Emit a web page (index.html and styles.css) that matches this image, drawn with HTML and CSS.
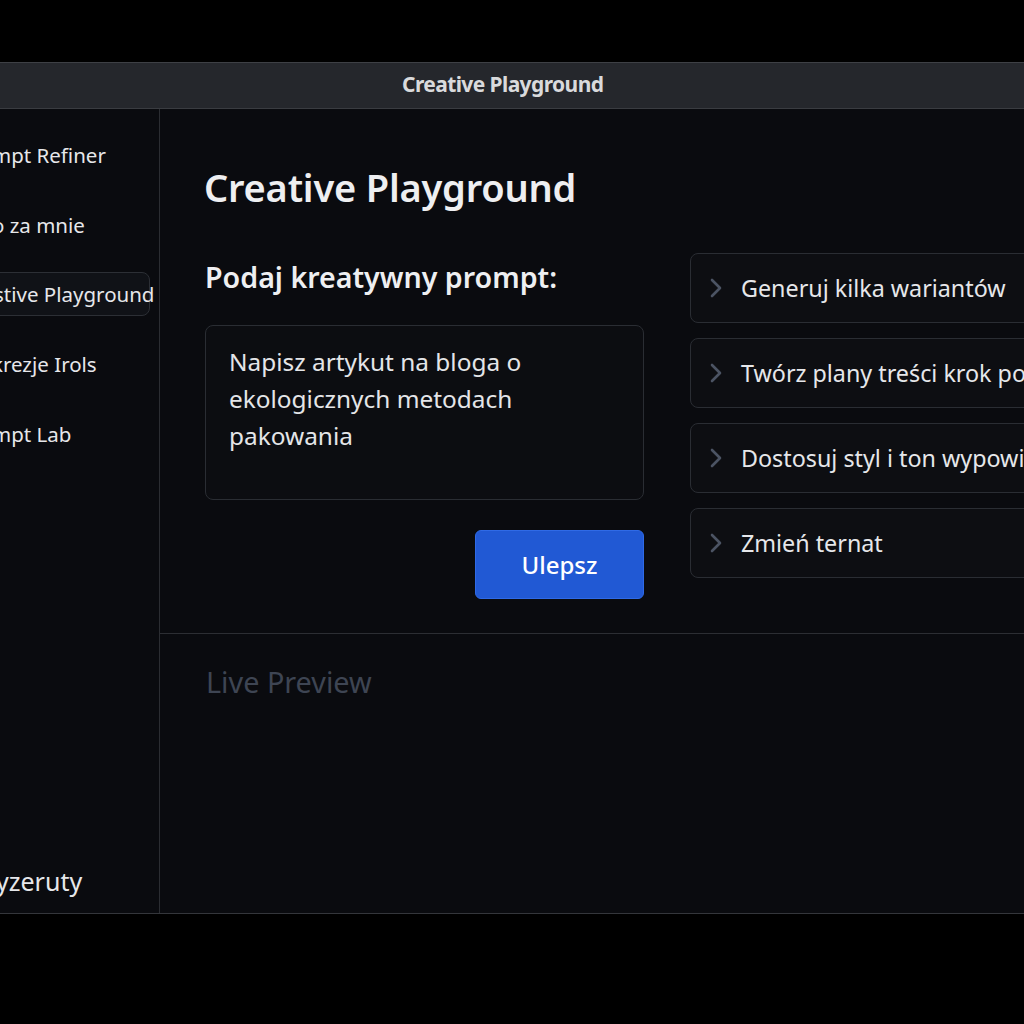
FILE: index.html
```html
<!DOCTYPE html>
<html lang="pl">
<head>
<meta charset="utf-8">
<title>Creative Playground</title>
<link rel="stylesheet" href="styles.css">
</head>
<body>
<div class="screen">
  <div class="window">
    <header class="titlebar">Creative Playground</header>
    <div class="body">
      <nav class="sidebar">
        <ul class="nav">
          <li class="nav-item">mpt Refiner</li>
          <li class="nav-item">o za mnie</li>
          <li class="nav-item active">stive Playground</li>
          <li class="nav-item">krezje Irols</li>
          <li class="nav-item">mpt Lab</li>
        </ul>
        <div class="nav-item nav-bottom">yzeruty</div>
      </nav>
      <main class="main">
        <section class="editor">
          <h1 class="page-title">Creative Playground</h1>
          <div class="columns">
            <div class="left-col">
              <h2 class="label">Podaj kreatywny prompt:</h2>
              <div class="prompt-box">Napisz artykut na bloga o ekologicznych metodach pakowania</div>
              <div class="actions"><button class="btn-primary">Ulepsz</button></div>
            </div>
            <div class="right-col">
              <div class="option"><svg class="chev" viewBox="0 0 12 20"><path d="M2 2 L10 10 L2 18"/></svg><span>Generuj kilka wariantów</span></div>
              <div class="option"><svg class="chev" viewBox="0 0 12 20"><path d="M2 2 L10 10 L2 18"/></svg><span>Twórz plany treści krok po kroku</span></div>
              <div class="option"><svg class="chev" viewBox="0 0 12 20"><path d="M2 2 L10 10 L2 18"/></svg><span>Dostosuj styl i ton wypowiedzi</span></div>
              <div class="option"><svg class="chev" viewBox="0 0 12 20"><path d="M2 2 L10 10 L2 18"/></svg><span>Zmień ternat</span></div>
            </div>
          </div>
        </section>
        <section class="preview">
          <h2 class="preview-title">Live Preview</h2>
        </section>
      </main>
    </div>
  </div>
</div>
</body>
</html>
```
FILE: styles.css
```css
* { box-sizing: border-box; }
html, body { margin: 0; padding: 0; background: #000; }
body { width: 1024px; height: 1024px; overflow: hidden; font-family: "Noto Sans", "Open Sans", sans-serif; color: #e8e9ec; }
.screen { padding-top: 62px; height: 1024px; }
.window { width: 1100px; height: 852px; display: flex; flex-direction: column; background: #0a0b0f; border-top: 1px solid #3e4045; border-bottom: 1px solid #34363b; }
.titlebar { height: 46px; flex: none; background: #25272c; border-bottom: 1px solid #3a3c41; display: flex; align-items: center; padding-left: 402px; padding-bottom: 4px; font-weight: 700; font-size: 21px; letter-spacing: -0.6px; color: #d9dadc; }
.body { flex: 1; display: flex; min-height: 0; }
.sidebar { width: 160px; flex: none; border-right: 1px solid #2b2d32; display: flex; flex-direction: column; overflow: hidden; padding-top: 24px; padding-bottom: 10px; }
.nav { list-style: none; margin: 0; padding: 0; display: flex; flex-direction: column; gap: 25.7px; flex: 1; }
.nav-item { height: 44px; display: flex; align-items: center; font-size: 20.5px; color: #e6e7ea; white-space: nowrap; margin-left: -8px; }
.nav-item.active { margin-left: -22px; padding-left: 15px; width: 172px; border: 1px solid #2c2f35; border-radius: 8px; background: #101217; }
.nav-bottom { margin-left: -4px; font-size: 25px; }
.main { flex: 1; display: flex; flex-direction: column; }
.editor { padding: 53px 0 34px 44px; border-bottom: 1px solid #2c2e33; }
.page-title { margin: 0; font-size: 38px; line-height: 50px; font-weight: 600; color: #eeeff1; letter-spacing: -0.2px; }
.columns { display: flex; gap: 46px; margin-top: 41px; }
.left-col { width: 440px; flex: none; display: flex; flex-direction: column; }
.label { margin: 5px 0 0 1px; font-size: 28.6px; line-height: 38px; font-weight: 600; color: #eeeff1; }
.prompt-box { margin-top: 29px; margin-left: 1px; height: 175px; border: 1px solid #2a2d33; border-radius: 8px; background: #0c0d11; padding: 17px 23px; font-size: 24.4px; line-height: 37px; color: #e4e5e8; }
.actions { display: flex; justify-content: flex-end; margin-top: 30px; }
.btn-primary { width: 169px; height: 69px; border: 1px solid #2f6ae6; border-radius: 6px; background: #2159d4; color: #fff; font-family: inherit; font-size: 24px; font-weight: 500; }
.right-col { flex: 1; display: flex; flex-direction: column; gap: 15px; }
.option { height: 70px; width: 420px; border: 1px solid #2a2d33; border-radius: 8px; background: #0d0e12; display: flex; align-items: center; padding-left: 19px; gap: 19px; font-size: 23.3px; color: #e6e7ea; white-space: nowrap; overflow: hidden; }
.chev { width: 12px; height: 20px; flex: none; fill: none; stroke: #4b5363; stroke-width: 2.6; stroke-linecap: round; stroke-linejoin: round; }
.preview { flex: 1; padding: 28px 0 0 46px; }
.preview-title { margin: 0; font-size: 28.8px; line-height: 40px; font-weight: 400; color: #3e4553; }
```
